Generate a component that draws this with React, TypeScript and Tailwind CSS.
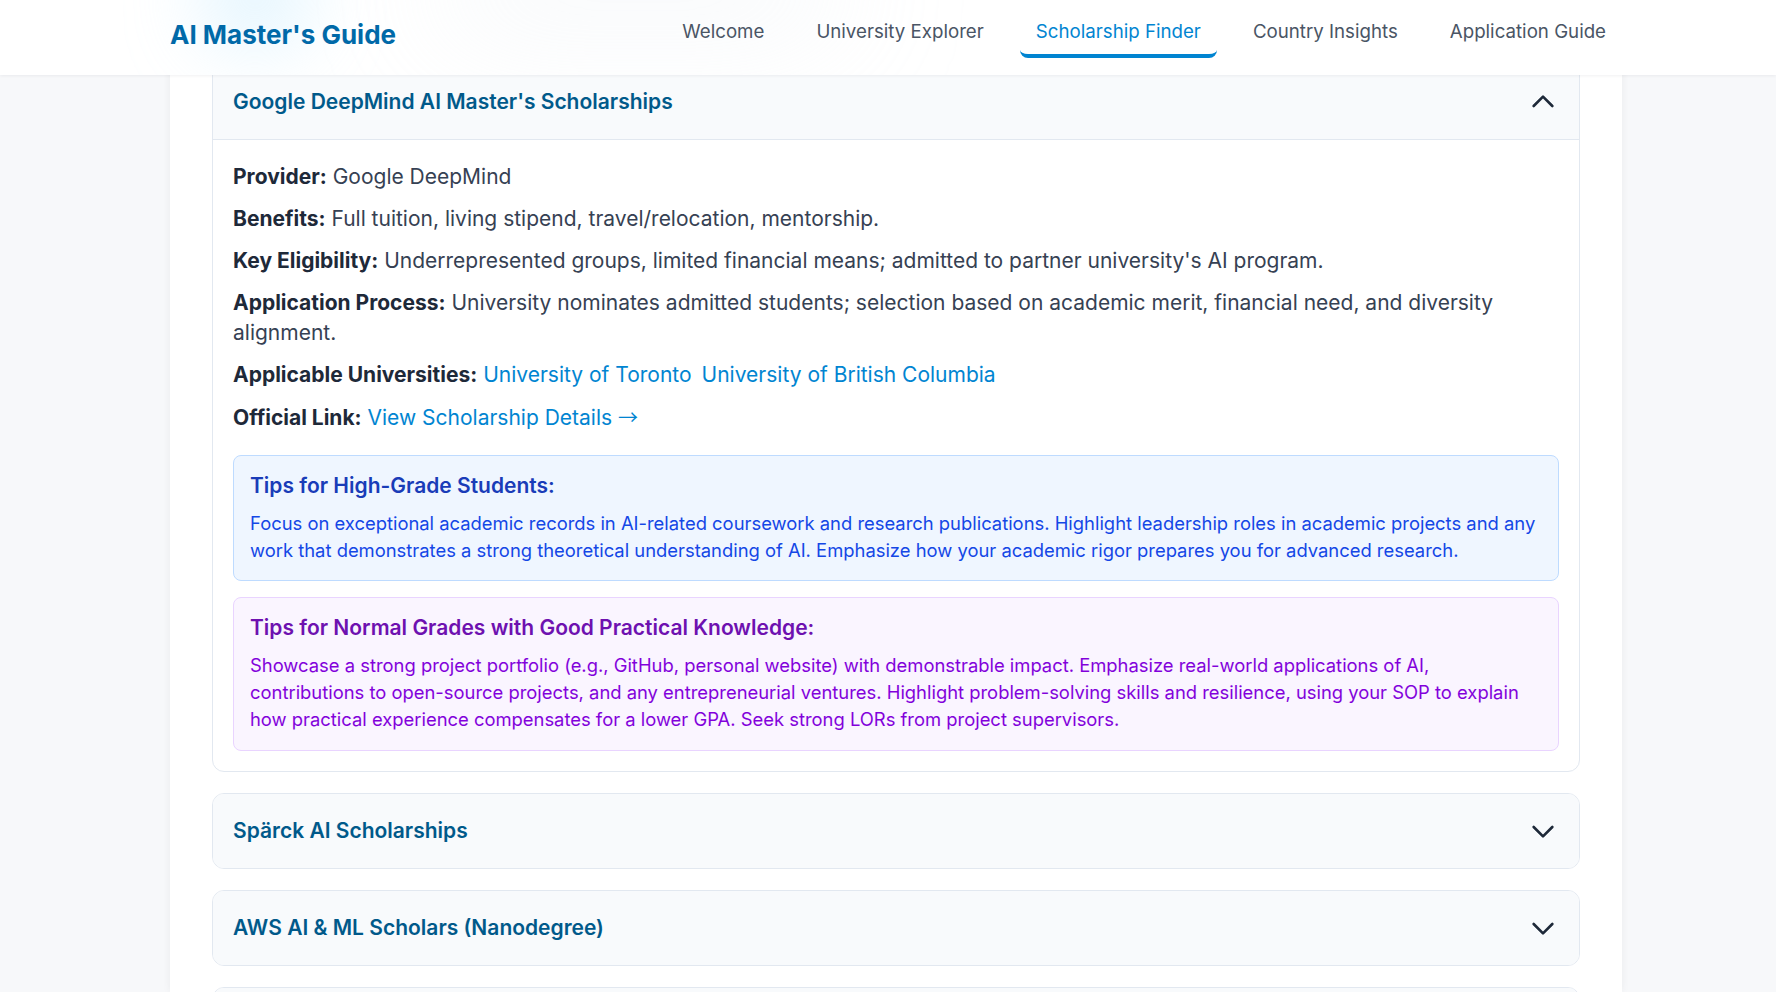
import { ReactNode } from 'react';

type Scholarship = {
    title: string;
    open?: boolean;
};

const navItems = ['Welcome', 'University Explorer', 'Scholarship Finder', 'Country Insights', 'Application Guide'];

const scholarships: Scholarship[] = [
    { title: "Google DeepMind AI Master's Scholarships", open: true },
    { title: 'Spärck AI Scholarships' },
    { title: 'AWS AI & ML Scholars (Nanodegree)' },
    { title: 'Fulbright Foreign Student Program' },
];

function Chevron({ up }: { up?: boolean }) {
    return (
        <svg
            viewBox="0 0 24 24"
            className="h-8 w-8 shrink-0 text-gray-800"
            fill="none"
            stroke="currentColor"
            strokeWidth={2}
            strokeLinecap="round"
            strokeLinejoin="round"
        >
            <path d={up ? 'M5 15l7-7 7 7' : 'M19 9l-7 7-7-7'} />
        </svg>
    );
}

function Field({ label, children }: { label: string; children: ReactNode }) {
    return (
        <p>
            <strong className="font-bold text-gray-800">{label}</strong> {children}
        </p>
    );
}

function Tip({ tone, title, text }: { tone: 'blue' | 'purple'; title: string; text: string }) {
    const isBlue = tone === 'blue';
    return (
        <div
            className={`rounded-lg border p-4 ${
                isBlue ? 'border-blue-200 bg-blue-50' : 'border-purple-200 bg-purple-50'
            }`}
        >
            <h4 className={`mb-2.5 text-[21px] leading-7 font-semibold ${isBlue ? 'text-blue-800' : 'text-purple-800'}`}>
                {title}
            </h4>
            <p className={`text-[18.4px] leading-[27.2px] ${isBlue ? 'text-blue-700' : 'text-purple-700'}`}>{text}</p>
        </div>
    );
}

function OpenBody() {
    return (
        <div className="px-5 pt-[22px] pb-5 text-[21px] leading-[30.6px] text-gray-700">
            <div className="space-y-[11.3px]">
                <Field label="Provider:">Google DeepMind</Field>
                <Field label="Benefits:">Full tuition, living stipend, travel/relocation, mentorship.</Field>
                <Field label="Key Eligibility:">
                    Underrepresented groups, limited financial means; admitted to partner university's AI program.
                </Field>
                <Field label="Application Process:">
                    University nominates admitted students; selection based on academic merit, financial need, and
                    diversity alignment.
                </Field>
                <p>
                    <strong className="font-bold text-gray-800">Applicable Universities:</strong>{' '}
                    <a href="#" className="mr-2.5 inline-block text-sky-600">
                        University of Toronto
                    </a>
                    <a href="#" className="inline-block text-sky-600">
                        University of British Columbia
                    </a>
                </p>
                <Field label="Official Link:">
                    <a href="#" className="text-sky-600">
                        View Scholarship Details{' '}
                        <span className="font-['Noto_Sans_CJK_SC',sans-serif] text-[20px]">→</span>
                    </a>
                </Field>
            </div>

            <div className="mt-[21px] space-y-4">
                <Tip
                    tone="blue"
                    title="Tips for High-Grade Students:"
                    text="Focus on exceptional academic records in AI-related coursework and research publications. Highlight leadership roles in academic projects and any work that demonstrates a strong theoretical understanding of AI. Emphasize how your academic rigor prepares you for advanced research."
                />
                <Tip
                    tone="purple"
                    title="Tips for Normal Grades with Good Practical Knowledge:"
                    text="Showcase a strong project portfolio (e.g., GitHub, personal website) with demonstrable impact. Emphasize real-world applications of AI, contributions to open-source projects, and any entrepreneurial ventures. Highlight problem-solving skills and resilience, using your SOP to explain how practical experience compensates for a lower GPA. Seek strong LORs from project supervisors."
                />
            </div>
        </div>
    );
}

export default function App() {
    return (
        <div className="relative h-[992px] overflow-hidden bg-[#f7f8fa] font-[Inter,sans-serif] text-gray-800">
            <header className="absolute inset-x-0 top-0 z-20 h-[75px] overflow-hidden bg-white shadow-[0_1px_3px_rgba(15,23,42,0.06)]">
                <div className="absolute -top-12 left-[205px] h-[90px] w-[100px] rounded-full bg-sky-200/50 blur-2xl" />
                <div className="absolute -top-10 left-[440px] h-[60px] w-[400px] rounded-full bg-slate-200/40 blur-3xl" />
                <div className="relative ml-[170px] flex w-[1452px] items-center justify-between pt-[10px]">
                    <h1 className="text-[26px] font-bold text-sky-700">AI Master's Guide</h1>
                    <nav className="flex items-center gap-[20px]">
                        {navItems.map((item) => {
                            const active = item === 'Scholarship Finder';
                            return (
                                <a
                                    key={item}
                                    href="#"
                                    className={`rounded-lg border-b-4 px-4 py-2 text-[18.7px] leading-7 ${
                                        active ? 'border-sky-600 text-sky-600' : 'border-transparent text-gray-600'
                                    }`}
                                >
                                    {item}
                                </a>
                            );
                        })}
                    </nav>
                </div>
            </header>

            <main className="ml-[170px] h-[992px] w-[1452px] bg-white px-[42px] pt-[64px] shadow-[0_0_8px_rgba(15,23,42,0.06)]">
                <div className="flex flex-col gap-[21px]">
                    {scholarships.map((s) => (
                        <div key={s.title} className="overflow-hidden rounded-xl border border-slate-200 bg-white">
                            <button
                                type="button"
                                className={`flex w-full items-center justify-between bg-slate-50 px-5 py-[21px] text-left ${
                                    s.open ? 'border-b border-slate-200' : ''
                                }`}
                            >
                                <span className="text-[21px] leading-7 font-semibold text-sky-800">{s.title}</span>
                                <Chevron up={s.open} />
                            </button>
                            {s.open && <OpenBody />}
                        </div>
                    ))}
                </div>
            </main>
        </div>
    );
}
